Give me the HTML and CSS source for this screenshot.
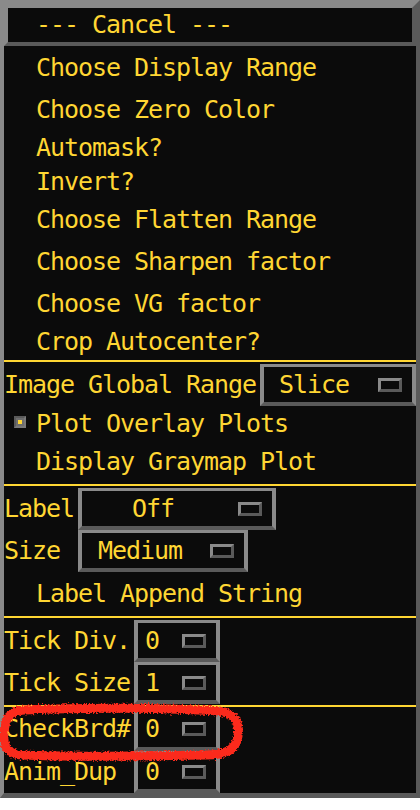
FILE: index.html
```html
<!DOCTYPE html>
<html>
<head>
<meta charset="utf-8">
<link rel="stylesheet" href="styles.css">
</head>
<body>
<div class="frame">
  <div class="cancel">--- Cancel ---</div>
  <div class="panel">
    <div class="item push">Choose Display Range</div>
    <div class="item push">Choose Zero Color</div>
    <div class="item toggle">Automask?</div>
    <div class="item toggle">Invert?</div>
    <div class="item push">Choose Flatten Range</div>
    <div class="item push">Choose Sharpen factor</div>
    <div class="item push">Choose VG factor</div>
    <div class="item toggle">Crop Autocenter?</div>
    <div class="sep"></div>
    <div class="field igr">
      <span class="label">Image Global Range</span>
      <div class="option opt-slice"><span class="value">Slice</span><span class="ind"></span></div>
    </div>
    <div class="field plot">
      <span class="check"><span class="dot"></span></span>
      <span class="plot-text">Plot Overlay Plots</span>
    </div>
    <div class="item push">Display Graymap Plot</div>
    <div class="sep"></div>
    <div class="grid grid-a">
      <span class="label">Label</span>
      <div class="option opt-off"><span class="value">Off</span><span class="ind"></span></div>
      <span class="label">Size</span>
      <div class="option opt-medium"><span class="value">Medium</span><span class="ind"></span></div>
    </div>
    <div class="item push tall">Label Append String</div>
    <div class="sep sep-tight"></div>
    <div class="grid grid-b">
      <span class="label">Tick Div.</span>
      <div class="option opt-num"><span class="value">0</span><span class="ind"></span></div>
      <span class="label">Tick Size</span>
      <div class="option opt-num"><span class="value">1</span><span class="ind"></span></div>
    </div>
    <div class="sep"></div>
    <div class="grid grid-c">
      <span class="label">CheckBrd#</span>
      <div class="option opt-num"><span class="value">0</span><span class="ind"></span></div>
      <span class="label">Anim_Dup</span>
      <div class="option opt-num"><span class="value">0</span><span class="ind"></span></div>
    </div>
  </div>
</div>
<svg class="mark" width="250" height="70" viewBox="0 0 250 70">
  <defs>
    <filter id="rough" x="-10%" y="-20%" width="120%" height="140%">
      <feTurbulence type="fractalNoise" baseFrequency="0.6" numOctaves="2" seed="3" result="n"/>
      <feDisplacementMap in="SourceGraphic" in2="n" scale="5" xChannelSelector="R" yChannelSelector="G"/>
    </filter>
  </defs>
  <path d="M24 10 C 90 7, 170 8, 218 11 C 236 13, 240 24, 238 36 C 236 50, 226 55, 205 55 C 150 56, 70 57, 22 55 C 6 54, 3 45, 4 33 C 5 18, 10 11, 24 10 Z" fill="none" stroke="#fb2a1a" stroke-width="9" filter="url(#rough)"/>
</svg>
</body>
</html>
```

FILE: styles.css
```css
* {
  box-sizing: border-box;
}

html,
body {
  margin: 0;
  padding: 0;
  background: #ffffff;
}

body {
  position: relative;
  width: 420px;
  height: 810px;
  font-family: "DejaVu Sans Mono", monospace;
  font-size: 25px;
  letter-spacing: -1.05px;
  color: #ffd633;
}

.frame {
  width: 420px;
  height: 798px;
  border-style: solid;
  border-width: 4px 4px 5px 4px;
  border-color: #8a8a8a #5a5a5a #5a5a5a #8a8a8a;
  background: #0b0b0b;
  display: flex;
  flex-direction: column;
}

.cancel {
  height: 42px;
  border-style: solid;
  border-width: 4px;
  border-color: #8a8a8a #5a5a5a #5a5a5a #8a8a8a;
  line-height: 34px;
  padding-left: 28px;
  white-space: pre;
}

.panel {
  flex: 1;
  padding-top: 1px;
  display: flex;
  flex-direction: column;
}

.item {
  padding-left: 32px;
  white-space: pre;
}

.push {
  height: 42px;
  line-height: 42px;
}

.toggle {
  height: 34px;
  line-height: 34px;
}

.tall {
  height: 44px;
  line-height: 44px;
}

.sep {
  height: 2px;
  margin-top: 1px;
  background: #ffd633;
  flex: none;
}

.sep-tight {
  margin-top: 0;
}

.field {
  display: flex;
  align-items: center;
}

.label {
  line-height: 42px;
  white-space: pre;
}

.igr {
  height: 44px;
  padding-top: 2px;
}

.igr .option {
  flex: 1;
  margin-left: 4px;
}

.option {
  height: 42px;
  display: flex;
  align-items: center;
  border-style: solid;
  border-width: 3px 4px 4px 4px;
  border-color: #8a8a8a #8a8a8a #5a5a5a #8a8a8a;
}

.value {
  white-space: pre;
  line-height: 35px;
}

.ind {
  width: 24px;
  height: 14px;
  margin-left: auto;
  margin-right: 10px;
  border-style: solid;
  border-width: 3px;
  border-color: #8a8a8a #5a5a5a #5a5a5a #8a8a8a;
  flex: none;
}

.opt-slice .value {
  padding-left: 15px;
}

.opt-off {
  width: 198px;
}

.opt-off .value {
  padding-left: 50px;
}

.opt-medium {
  width: 170px;
}

.opt-medium .value {
  padding-left: 16px;
}

.opt-num {
  width: 86px;
}

.opt-num .value {
  padding-left: 7px;
}

.plot {
  height: 35px;
  padding-left: 10px;
}

.check {
  width: 12px;
  height: 12px;
  margin-bottom: 3px;
  background: #6e6e6e;
  border-style: solid;
  border-width: 2px;
  border-color: #5a5a5a #7a7a7a #7a7a7a #5a5a5a;
  display: flex;
  align-items: center;
  justify-content: center;
  flex: none;
}

.dot {
  width: 4px;
  height: 4px;
  background: #ffd633;
}

.plot-text {
  margin-left: 10px;
  line-height: 35px;
  white-space: pre;
}

.grid {
  display: grid;
  justify-items: start;
  align-items: center;
}

.grid-a {
  grid-template-columns: 74px auto;
  grid-auto-rows: 42px;
  padding-top: 2px;
}

.grid-b {
  grid-template-columns: 130px auto;
  grid-auto-rows: 42px;
  padding-top: 2px;
}

.grid-c {
  grid-template-columns: 130px auto;
  grid-template-rows: 44px 42px;
}

.grid-c .option:first-of-type {
  height: 44px;
}

.mark {
  position: absolute;
  left: 0;
  top: 700px;
}
```
